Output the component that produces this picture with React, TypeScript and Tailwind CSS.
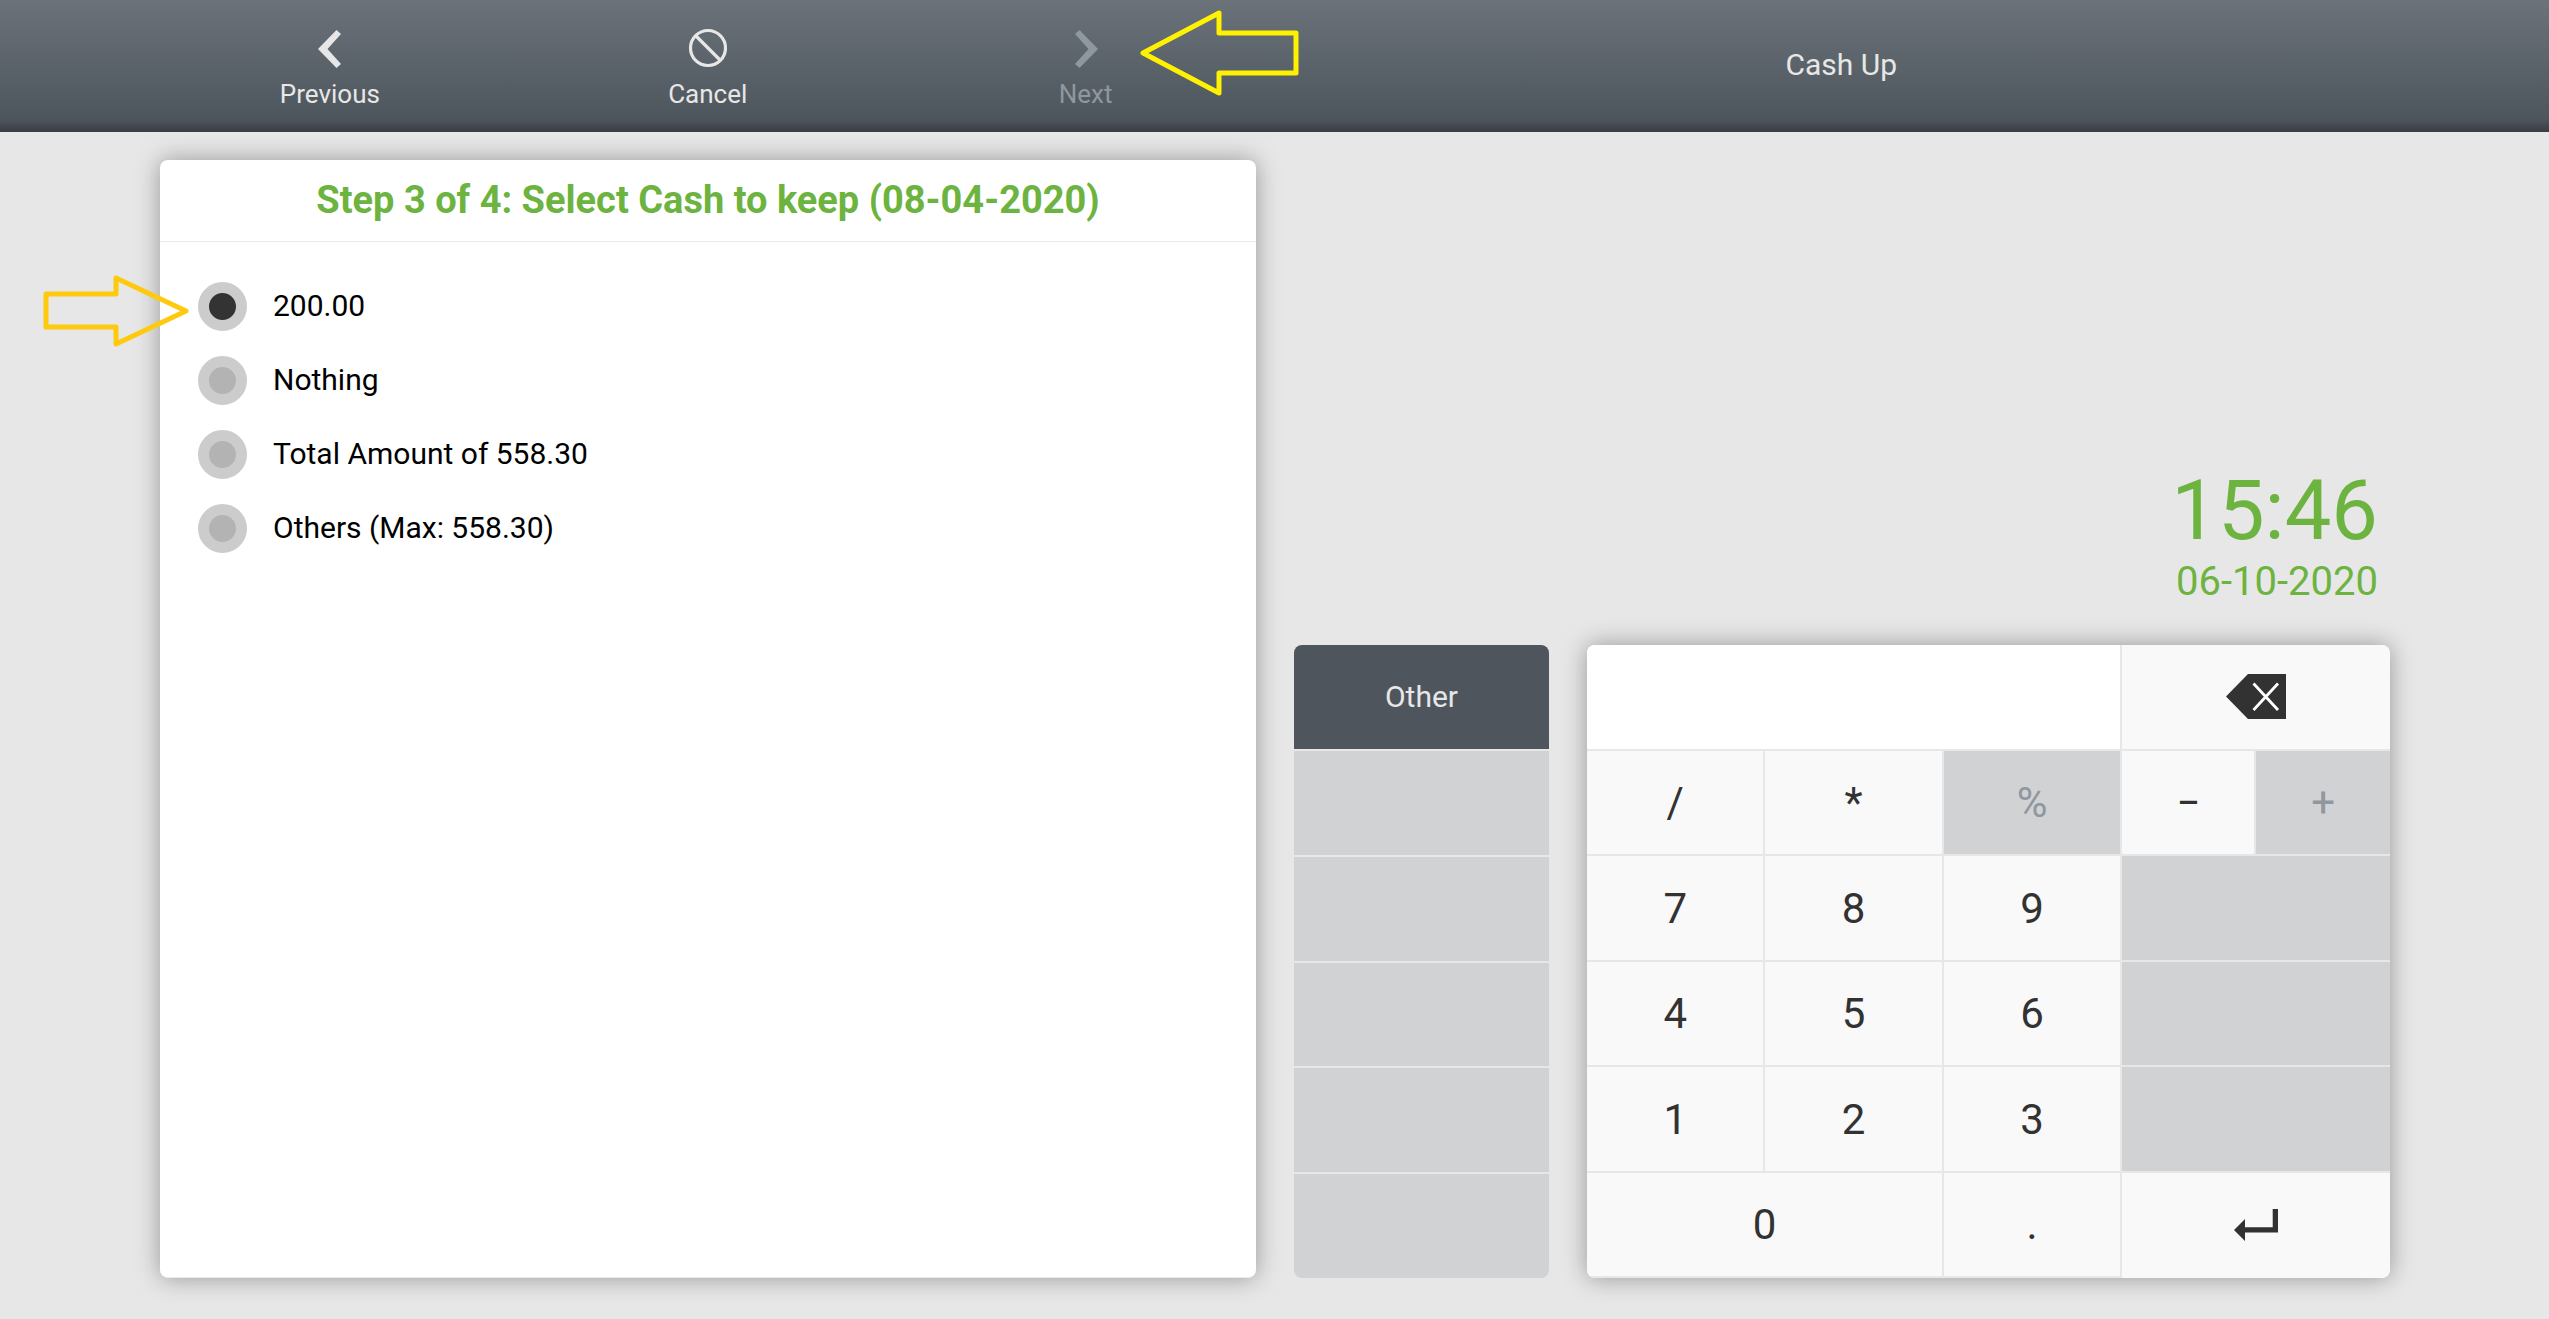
import { useState } from 'react'
import type { ReactNode } from 'react'
import clsx from 'clsx'

interface Key {
  id: string
  content?: ReactNode
  label?: string
  span: string
  kind?: 'empty' | 'disabled' | 'plain'
}

const OPTIONS: { value: string; label: string }[] = [
  { value: 'float', label: '200.00' },
  { value: 'nothing', label: 'Nothing' },
  { value: 'total', label: 'Total Amount of 558.30' },
  { value: 'others', label: 'Others (Max: 558.30)' },
]

const KEYS: Key[] = [
  { id: 'backspace', content: <BackspaceIcon />, label: 'Backspace', span: 'col-span-6 border-b-2' },
  { id: 'divide', content: '/', span: 'col-span-4 border-r-2 border-b-2' },
  { id: 'multiply', content: '*', span: 'col-span-4 border-r-2 border-b-2' },
  { id: 'percent', content: '%', span: 'col-span-4 border-r-2 border-b-2', kind: 'disabled' },
  { id: 'minus', content: '−', span: 'col-span-3 border-r-2 border-b-2' },
  { id: 'plus', content: '+', span: 'col-span-3 border-b-2', kind: 'disabled' },
  { id: '7', content: '7', span: 'col-span-4 border-r-2 border-b-2' },
  { id: '8', content: '8', span: 'col-span-4 border-r-2 border-b-2' },
  { id: '9', content: '9', span: 'col-span-4 border-r-2 border-b-2' },
  { id: 'empty-1', span: 'col-span-6 border-b-2', kind: 'empty' },
  { id: '4', content: '4', span: 'col-span-4 border-r-2 border-b-2' },
  { id: '5', content: '5', span: 'col-span-4 border-r-2 border-b-2' },
  { id: '6', content: '6', span: 'col-span-4 border-r-2 border-b-2' },
  { id: 'empty-2', span: 'col-span-6 border-b-2', kind: 'empty' },
  { id: '1', content: '1', span: 'col-span-4 border-r-2 border-b-2' },
  { id: '2', content: '2', span: 'col-span-4 border-r-2 border-b-2' },
  { id: '3', content: '3', span: 'col-span-4 border-r-2 border-b-2' },
  { id: 'empty-3', span: 'col-span-6 border-b-2', kind: 'empty' },
  { id: '0', content: '0', span: 'col-span-8 border-r-2 border-b-2' },
  { id: 'dot', content: '.', span: 'col-span-4 border-r-2 border-b-2' },
  { id: 'enter', content: <EnterIcon />, label: 'Enter', span: 'col-span-6' },
]

export default function App() {
  return (
    <div className="flex min-h-screen flex-col bg-[#e7e7e7] font-[Roboto,sans-serif]">
      <Header />
      <main className="grid flex-1 grid-cols-[1096fr_255fr_803fr] grid-rows-[485fr_633fr] gap-x-[38px] pt-7 pr-[159px] pb-[41px] pl-40">
        <CashPanel />
        <Clock />
        <SideKeys />
        <Keypad />
      </main>
    </div>
  )
}

function Header() {
  return (
    <header className="grid h-[132px] grid-cols-2 bg-[linear-gradient(to_bottom,#6b7279_0,#4e565d_119px,#3a3c44_132px)] px-[141px] text-[#e7e7e7]">
      <nav className="grid grid-cols-3">
        <HeaderButton label="Previous" icon={<ChevronIcon />} />
        <HeaderButton label="Cancel" icon={<CancelIcon />} />
        <div className="relative grid">
          <HeaderButton label="Next" icon={<ChevronIcon flipped />} disabled />
          <svg className="pointer-events-none absolute top-2.5 left-[242px] h-[88px] w-[160px]" viewBox="0 0 160 88" fill="none">
            <path d="M4 43 80 3V23H157V63H80V83Z" stroke="#fff200" strokeWidth="5" strokeLinejoin="round" />
          </svg>
        </div>
      </nav>
      <h1 className="flex items-center justify-center pb-1 text-[30px]">Cash Up</h1>
    </header>
  )
}

function HeaderButton({ label, icon, disabled }: { label: string; icon: ReactNode; disabled?: boolean }) {
  return (
    <button disabled={disabled} className="flex flex-col items-center gap-3 pt-7 text-[26px] leading-7 disabled:text-[#8f979f]">
      {icon}
      {label}
    </button>
  )
}

function CashPanel() {
  const [selected, setSelected] = useState('float')

  return (
    <section className="row-span-2 rounded-lg border-b border-[#ebebeb] bg-white shadow-[0_0_25px_rgba(0,0,0,0.35)]">
      <h2 className="flex h-[82px] items-center justify-center border-b border-[#ebebeb] text-[38px] font-bold text-[#6cb33f]">
        Step 3 of 4: Select Cash to keep (08-04-2020)
      </h2>
      <div className="relative flex flex-col gap-[25px] px-[38px] pt-10">
        {OPTIONS.map(o => (
          <label key={o.value} className="flex items-start gap-[26px] text-[30px] leading-[47px] text-black">
            <input
              type="radio"
              name="cash-to-keep"
              value={o.value}
              checked={selected === o.value}
              onChange={() => setSelected(o.value)}
              className="size-[49px] shrink-0 appearance-none rounded-full border-[11px] border-[#ccc] bg-[#b3b3b3] checked:bg-[#333]"
            />
            {o.label}
          </label>
        ))}
        <svg className="pointer-events-none absolute top-8 -left-[118px] h-[74px] w-[148px]" viewBox="0 0 148 74" fill="none">
          <path d="M4 20H74V4L144 37 74 70V53H4Z" stroke="#ffc90e" strokeWidth="5" strokeLinejoin="round" />
        </svg>
      </div>
    </section>
  )
}

function Clock() {
  return (
    <div className="col-start-3 flex flex-col items-end justify-end pr-3 pb-[38px] text-[#6cb33f]">
      <time className="text-[83px] leading-[92px]">15:46</time>
      <time className="text-[40px] leading-[50px]">06-10-2020</time>
    </div>
  )
}

function SideKeys() {
  return (
    <div className="col-start-2 grid grid-rows-6 gap-0.5 overflow-hidden rounded-lg">
      <button className="bg-[#4e555d] text-[30px] text-[#e7e7e7]">Other</button>
      {[1, 2, 3, 4, 5].map(n => (
        <div key={n} className="bg-[#d1d2d4]" />
      ))}
    </div>
  )
}

function Keypad() {
  return (
    <div className="rounded-lg shadow-[0_0_25px_rgba(0,0,0,0.35)]">
      <div className="grid h-full grid-cols-[repeat(18,minmax(0,1fr))] grid-rows-6 overflow-hidden rounded-lg bg-[#f9f9f9]">
        <input aria-label="Amount" className="col-span-12 border-r-2 border-b-2 border-[#e7e7e7] bg-white px-6 text-[42px] text-[#323232] outline-none" />
        {KEYS.map(k =>
          k.kind === 'empty' ? (
            <div key={k.id} className={clsx('border-[#e7e7e7] bg-[#d1d2d4]', k.span)} />
          ) : (
            <button
              key={k.id}
              aria-label={k.label}
              disabled={k.kind === 'disabled'}
              className={clsx(
                'flex items-center justify-center border-[#e7e7e7] text-[42px] leading-none text-[#323232]',
                'disabled:bg-[#d1d2d4] disabled:text-[#8f979f]',
                !k.label && 'pt-0.5',
                k.span,
              )}
            >
              {k.content}
            </button>
          ),
        )}
      </div>
    </div>
  )
}

function ChevronIcon({ flipped }: { flipped?: boolean }) {
  return (
    <svg className={clsx('h-10 w-6', flipped && '-scale-x-100')} viewBox="0 0 24 40" fill="currentColor">
      <path d="M18.500 2 23 6 9.500 21 23 36 18.500 40 0 21Z" />
    </svg>
  )
}

function CancelIcon() {
  return (
    <svg className="size-10" viewBox="0 0 40 40" fill="none" stroke="currentColor" strokeWidth="3.200">
      <circle cx="20" cy="20" r="17.500" />
      <path d="M8 8 32 32" />
    </svg>
  )
}

function BackspaceIcon() {
  return (
    <svg className="h-[45px] w-[60px]" viewBox="0 0 60 45">
      <path d="M0 22.500 22 0H60V45H22Z" fill="#323232" />
      <path d="M27.500 9.500 52 36M52 9.500 27.500 36" stroke="#fff" strokeWidth="2.800" />
    </svg>
  )
}

function EnterIcon() {
  return (
    <svg className="h-8 w-11" viewBox="0 0 44 32" fill="#323232">
      <path d="M0 21 11 10V18.200H38.700V0H44V23.600H11V32Z" />
    </svg>
  )
}
